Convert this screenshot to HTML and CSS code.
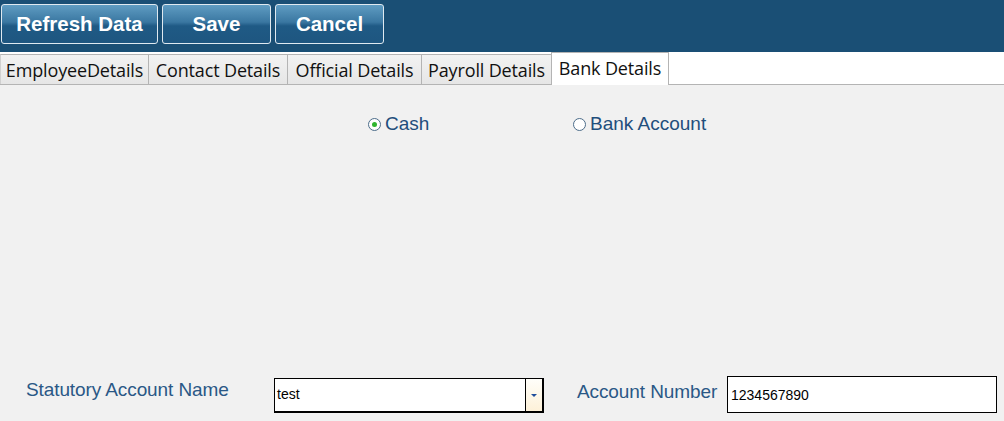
FILE: index.html
```html
<!DOCTYPE html>
<html lang="en">
<head>
  <meta charset="UTF-8">
  <title>Employee - Bank Details</title>
  <link rel="stylesheet" href="styles.css">
</head>
<body>
  <div class="toolbar">
    <button class="tool-btn refresh">Refresh Data</button>
    <button class="tool-btn save">Save</button>
    <button class="tool-btn cancel">Cancel</button>
  </div>

  <div class="tabs">
    <div class="tab t1">EmployeeDetails</div>
    <div class="tab t2">Contact Details</div>
    <div class="tab t3">Official Details</div>
    <div class="tab t4">Payroll Details</div>
    <div class="tab t5 selected">Bank Details</div>
    <div class="tab-rest"></div>
  </div>

  <div class="panel">
    <div class="pay-mode">
      <label class="radio cash"><span class="dot checked"></span>Cash</label>
      <label class="radio bank"><span class="dot"></span>Bank Account</label>
    </div>

    <div class="fields">
      <span class="field-label name-label">Statutory Account Name</span>
      <div class="combo">
        <span class="combo-text">test</span>
        <span class="combo-btn"><span class="arrow"></span></span>
      </div>
      <span class="field-label number-label">Account Number</span>
      <div class="textbox">1234567890</div>
    </div>
  </div>
</body>
</html>
```

FILE: styles.css
```css
html, body {
  margin: 0;
  padding: 0;
}
body {
  width: 1004px;
  height: 421px;
  background: #f1f1f1;
  font-family: 'Liberation Sans', Arial, sans-serif;
  overflow: hidden;
}

/* top button bar */
.toolbar {
  height: 52px;
  background: #1a4f75;
  display: flex;
  align-items: flex-start;
  padding: 4px 0 0 1px;
  box-sizing: border-box;
  gap: 4px;
}
.tool-btn {
  height: 40px;
  border: 1px solid #dfe9f0;
  border-radius: 3px;
  background: linear-gradient(#5f9cc2 0%, #3a77a1 45%, #1f5a85 55%, #1e5680 100%);
  color: #fff;
  font-family: 'Liberation Sans', Arial, sans-serif;
  font-weight: bold;
  font-size: 20.5px;
  padding: 0;
}
.refresh { width: 157px; }
.save { width: 109px; }
.cancel { width: 109px; }

/* tab strip */
.tabs {
  display: flex;
  height: 33px;
  box-sizing: border-box;
  padding-top: 1px;
  background: #fff;
  border-bottom: 1px solid #b4b4b4;
  font-family: 'Open Sans', 'Noto Sans', sans-serif;
  font-size: 18px;
}
.tab {
  box-sizing: border-box;
  border: 1px solid #b4b4b4;
  border-bottom: none;
  border-left: none;
  background: linear-gradient(#f2f2f2, #e6e6e6);
  color: #111;
  display: flex;
  align-items: center;
  justify-content: center;
  margin-top: 1px;
  letter-spacing: -0.15px;
  white-space: nowrap;
}
.t1 { width: 149px; border-left: 1px solid #d0d0d0; }
.t2 { width: 139px; }
.t3 { width: 134px; }
.t4 { width: 130px; }
.t5 { width: 118px; }
.tab.selected {
  background: #fff;
  margin-top: -1px;
  margin-bottom: -1px;
  border-left: 1px solid #b4b4b4;
  margin-left: -1px;
  padding-bottom: 3px;
}
.tab-rest {
  flex: 1;
}

/* content */
.panel {
  height: 336px;
  display: flex;
  flex-direction: column;
  justify-content: space-between;
}
.pay-mode {
  display: flex;
  padding: 28px 0 0 368px;
}
.radio {
  display: flex;
  align-items: center;
  color: #1f4e7c;
  font-size: 19px;
  font-family: 'Liberation Sans', Arial, sans-serif;
}
.cash { width: 205px; }
.dot {
  width: 11px;
  height: 11px;
  border: 1px solid #4d6d8a;
  border-radius: 50%;
  background: #fff;
  box-sizing: content-box;
  margin-right: 4px;
  position: relative;
}
.dot.checked::after {
  content: "";
  position: absolute;
  left: 3px;
  top: 3px;
  width: 5px;
  height: 5px;
  border-radius: 50%;
  background: #2fb52f;
}

.fields {
  display: flex;
  align-items: center;
  padding: 0 0 8px 26px;
}
.field-label {
  color: #2a5886;
  font-size: 19px;
  letter-spacing: -0.1px;
  white-space: nowrap;
}
.name-label {
  width: 248px;
  margin-top: -8px;
}
.number-label {
  width: 150px;
  margin-left: 33px;
  margin-top: -4px;
}
.combo {
  width: 270px;
  height: 35px;
  box-sizing: border-box;
  border: 1px solid #000;
  border-right-width: 2px;
  border-bottom-width: 2px;
  background: #fff;
  display: flex;
  margin-top: 3px;
}
.combo-text {
  flex: 1;
  font-size: 14px;
  color: #000;
  padding: 7px 0 0 2px;
}
.combo-btn {
  width: 16px;
  border-left: 1px solid #000;
  background: linear-gradient(#fffefa, #fdf1d8);
  display: flex;
  align-items: center;
  justify-content: center;
}
.arrow {
  width: 0;
  height: 0;
  border-left: 3px solid transparent;
  border-right: 3px solid transparent;
  border-top: 3px solid #1f4e9c;
}
.textbox {
  width: 270px;
  height: 37px;
  box-sizing: border-box;
  border: 1px solid #000;
  background: #fff;
  font-size: 14px;
  color: #000;
  padding: 10px 0 0 3px;
}
```
